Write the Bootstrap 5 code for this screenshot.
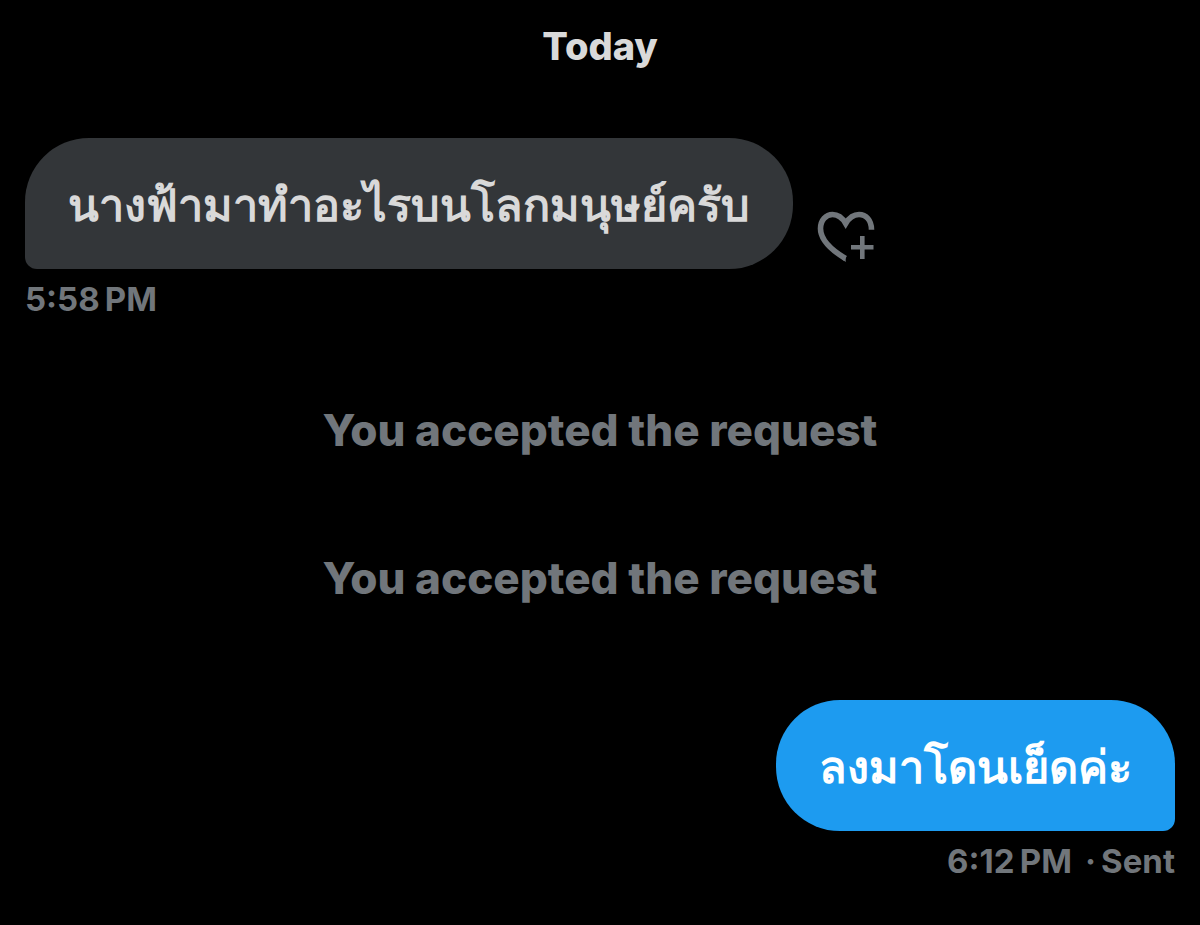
<!DOCTYPE html>
<html lang="en">
<head>
<meta charset="utf-8">
<meta name="viewport" content="width=device-width, initial-scale=1">
<title>Messages</title>
<link href="https://cdn.jsdelivr.net/npm/bootstrap@5.3.0/dist/css/bootstrap.min.css" rel="stylesheet">
<style>
body{background:#000;color:#d9d9d9;font-family:Inter,"Noto Sans",sans-serif}
.chat{padding:20px 25px}
.day{font-size:38px;line-height:52px;font-weight:800;margin-bottom:66px}
.bubble{font-family:Inter,Garuda,Waree,sans-serif;font-size:45px;line-height:67px;padding:33px 43px 31px;font-weight:600;border-radius:64px}
.bubble-in{background:#333639;border-bottom-left-radius:12px}
.bubble-out{background:#1d9bf0;color:#fff;border-bottom-right-radius:12px}
.stamp{font-size:33px;line-height:44px;font-weight:700;color:#71767b;margin-top:8px}
.notices{display:grid;gap:88px;padding:79px 0 92px}
.notice{font-size:44px;line-height:60px;font-weight:800;color:#71767b}
.react{color:#71767b;margin:0 0 5px 23px;line-height:1}
</style>
</head>
<body>
<main class="chat">
<h1 class="day text-center">Today</h1>
<div class="d-flex align-items-end">
<div class="bubble bubble-in" lang="th">นางฟ้ามาทำอะไรบนโลกมนุษย์ครับ</div>
<button class="react btn border-0 p-0" type="button" aria-label="Add reaction">
<svg class="d-block" width="60" height="54" viewBox="0 0 60 54" fill="none" stroke="currentColor" aria-hidden="true">
<path d="M29.500 48.500C17 41 4.500 31 4.500 18.500C4.500 10 10 4.500 16.500 4.500C22.500 4.500 26.500 8 29.700 13.500C33 8 37 4.500 43 4.500C50 4.500 55.500 10 55.500 19.700" stroke-width="5.600"/>
<path d="M29.700 45.400V52L26 49.300Z" fill="currentColor" stroke="none"/>
<path d="M35 37.300H57.500M46.300 26V49" stroke-width="4.600"/>
</svg>
</button>
</div>
<div class="stamp">5:58&#8239;PM</div>
<div class="notices text-center">
<p class="notice m-0">You accepted the request</p>
<p class="notice m-0">You accepted the request</p>
</div>
<div class="d-flex justify-content-end"><div class="bubble bubble-out" lang="th">ลงมาโดนเย็ดค่ะ</div></div>
<div class="stamp text-end">6:12&#8239;PM&#8239; ·&#8239;Sent</div>
</main>
<script src="https://cdn.jsdelivr.net/npm/bootstrap@5.3.0/dist/js/bootstrap.bundle.min.js"></script>
</body>
</html>
